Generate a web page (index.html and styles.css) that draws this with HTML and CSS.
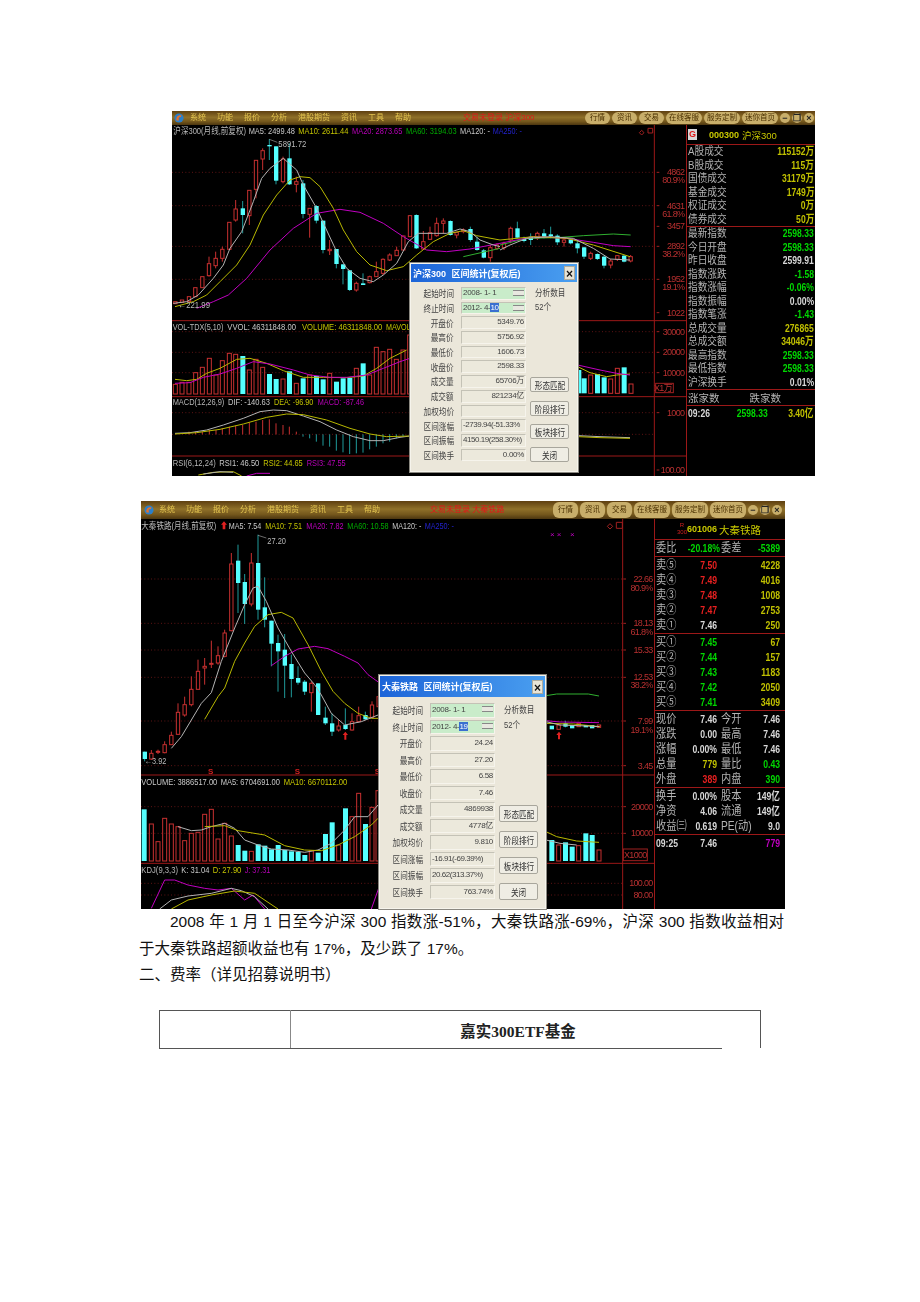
FILE: index.html
```html
<!doctype html>
<html lang="zh-CN">
  <head>
    <meta charset="UTF-8" />
    <title>沪深300 区间统计</title>
    <link rel="stylesheet" href="styles.css">
  </head>
  <body>
    <div class="page">
      <!-- first terminal shot -->
      <div class="app app-index">
        <div class="titlebar">
          <svg class="logo" viewBox="0 0 12 12"><circle cx="6" cy="6" r="5.5" fill="#2b7fc9"/><path d="M3 9 C2 5 5 2 9 3 L8 5 C6 4.500 5 6 6 9 Z" fill="#e8722a"/></svg>
          <div class="menu"><span>系统</span><span>功能</span><span>报价</span><span>分析</span><span>港股期货</span><span>资讯</span><span>工具</span><span>帮助</span></div>
          <div class="status-red">交易未登录 沪深300</div>
          <div class="pills"><span>行情</span><span>资讯</span><span>交易</span><span class="wide">在线客服</span><span class="wide">服务定制</span><span class="wide">迷你首页</span></div>
          <div class="winbtns"><span>−</span><span>❐</span><span>×</span></div>
        </div>
        <div class="app-body">
          <svg class="chart" viewBox="0 0 1542 1053" width="514" height="351">
            <g class="dots">
              <path d="M0 142H1446M0 242H1446M0 364H1446M0 463H1446M0 620H1446M0 682H1446M0 743H1446M0 863H1446M0 928H1446"/>
            </g>
            <path class="rule" d="M0 587H1542M0 815H1542M0 993H1542M1447 0V1053"/>
            <g id="a-main" transform="translate(-6 -60)"></g>
            <g id="a-main2" transform="translate(984 -60)"></g>
            <g id="a-low" transform="translate(-6 495)"></g>
            <g id="a-right" transform="translate(684 405)"></g>

            <g transform="translate(-6 -60)">
              <text class="lbl c-grey" x="10" y="87" textLength="218" lengthAdjust="spacingAndGlyphs">沪深300(月线,前复权)</text>
              <text class="lbl c-white" x="236" y="87" textLength="139" lengthAdjust="spacingAndGlyphs">MA5: 2499.48</text>
              <text class="lbl c-yellow" x="385" y="87" textLength="150" lengthAdjust="spacingAndGlyphs">MA10: 2611.44</text>
              <text class="lbl c-magenta" x="546" y="87" textLength="151" lengthAdjust="spacingAndGlyphs">MA20: 2873.65</text>
              <text class="lbl c-green" x="708" y="87" textLength="152" lengthAdjust="spacingAndGlyphs">MA60: 3194.03</text>
              <text class="lbl c-white" x="870" y="87" textLength="90" lengthAdjust="spacingAndGlyphs">MA120: -</text>
              <text class="lbl c-blue" x="968" y="87" textLength="88" lengthAdjust="spacingAndGlyphs">MA250: -</text>
              <text class="lbl c-grey" x="325" y="127" textLength="84" lengthAdjust="spacingAndGlyphs">5891.72</text>
              <path class="thin" d="M298 103 L322 112"/>
              <text class="lbl c-grey" x="25" y="609" textLength="95" lengthAdjust="spacingAndGlyphs">←221.99</text>
            </g>
            <g transform="translate(-6 495)">
              <text class="lbl c-grey" x="8" y="119" textLength="152" lengthAdjust="spacingAndGlyphs">VOL-TDX(5,10)</text>
              <text class="lbl c-white" x="172" y="119" textLength="206" lengthAdjust="spacingAndGlyphs">VVOL: 46311848.00</text>
              <text class="lbl c-yellow" x="396" y="119" textLength="241" lengthAdjust="spacingAndGlyphs">VOLUME: 46311848.00</text>
              <text class="lbl c-yellow" x="648" y="119" textLength="74" lengthAdjust="spacingAndGlyphs">MAVOL</text>
              <text class="lbl c-grey" x="8" y="344" textLength="155" lengthAdjust="spacingAndGlyphs">MACD(12,26,9)</text>
              <text class="lbl c-white" x="174" y="344" textLength="126" lengthAdjust="spacingAndGlyphs">DIF: -140.63</text>
              <text class="lbl c-yellow" x="312" y="344" textLength="118" lengthAdjust="spacingAndGlyphs">DEA: -96.90</text>
              <text class="lbl c-magenta" x="443" y="344" textLength="139" lengthAdjust="spacingAndGlyphs">MACD: -87.46</text>
              <text class="lbl c-grey" x="8" y="527" textLength="129" lengthAdjust="spacingAndGlyphs">RSI(6,12,24)</text>
              <text class="lbl c-white" x="148" y="527" textLength="120" lengthAdjust="spacingAndGlyphs">RSI1: 46.50</text>
              <text class="lbl c-yellow" x="280" y="527" textLength="118" lengthAdjust="spacingAndGlyphs">RSI2: 44.65</text>
              <text class="lbl c-magenta" x="410" y="527" textLength="117" lengthAdjust="spacingAndGlyphs">RSI3: 47.55</text>
            </g>
            <g class="ticks"><path d="M1454 142h8M1454 242h8M1454 304h8M1454 364h8M1454 463h8M1454 563h8M1454 620h8M1454 682h8M1454 743h8M1454 863h8M1454 1035h8"/></g>
            <g class="ax">
              <text x="1537" y="151">4862</text><text x="1537" y="175">80.9%</text>
              <text x="1537" y="251">4631</text><text x="1537" y="275">61.8%</text>
              <text x="1537" y="312">3457</text>
              <text x="1537" y="373">2892</text><text x="1537" y="397">38.2%</text>
              <text x="1537" y="472">1952</text><text x="1537" y="496">19.1%</text>
              <text x="1537" y="572">1022</text>
              <text x="1537" y="629">30000</text><text x="1537" y="691">20000</text><text x="1537" y="752">10000</text>
              <text x="1537" y="872">1000</text><text x="1537" y="1044">100.00</text>
              <text x="1500" y="799">X1万</text>
            </g>
            <rect class="box" x="1451" y="775" width="53" height="28"/>
            <path class="box" d="M1409 16l7 7 -7 7 -7 -7zM1428 10h14v14h-14z"/>
          </svg>
          <div class="side side-index">
            <div class="sec sec-head">
              <span class="g-mark">G</span>
              <span class="code">000300</span><span class="name">沪深300</span>
            </div>
            <div class="sec">
              <div class="row"><span>A股成交</span><b class="y">115152万</b></div>
              <div class="row"><span>B股成交</span><b class="y">115万</b></div>
              <div class="row"><span>国债成交</span><b class="y">31179万</b></div>
              <div class="row"><span>基金成交</span><b class="y">1749万</b></div>
              <div class="row"><span>权证成交</span><b class="y">0万</b></div>
              <div class="row"><span>债券成交</span><b class="y">50万</b></div>
            </div>
            <div class="sec">
              <div class="row"><span>最新指数</span><b class="gn">2598.33</b></div>
              <div class="row"><span>今日开盘</span><b class="gn">2598.33</b></div>
              <div class="row"><span>昨日收盘</span><b class="w">2599.91</b></div>
              <div class="row"><span>指数涨跌</span><b class="gn">-1.58</b></div>
              <div class="row"><span>指数涨幅</span><b class="gn">-0.06%</b></div>
              <div class="row"><span>指数振幅</span><b class="w">0.00%</b></div>
              <div class="row"><span>指数笔涨</span><b class="gn">-1.43</b></div>
              <div class="row"><span>总成交量</span><b class="y">276865</b></div>
              <div class="row"><span>总成交额</span><b class="y">34046万</b></div>
              <div class="row"><span>最高指数</span><b class="gn">2598.33</b></div>
              <div class="row"><span>最低指数</span><b class="gn">2598.33</b></div>
              <div class="row"><span>沪深换手</span><b class="w">0.01%</b></div>
            </div>
            <div class="sec sec-updown"><span>涨家数</span><span>跌家数</span></div>
            <div class="tick-row"><b class="w">09:26</b><b class="gn">2598.33</b><b class="y">3.40亿</b></div>
          </div>
        </div>

        <div class="dlg dlg-index">
          <div class="dlg-title"><span>沪深300 区间统计(复权后)</span><i class="dlg-x">×</i></div>
          <div class="dlg-body">
            <div class="dlg-form">
              <label>起始时间</label><div class="field date">2008- 1- 1<s></s></div>
              <label>终止时间</label><div class="field date">2012- 4-<em>10</em><s></s></div>
              <label>开盘价</label><div class="field">5349.76</div>
              <label>最高价</label><div class="field">5756.92</div>
              <label>最低价</label><div class="field">1606.73</div>
              <label>收盘价</label><div class="field">2598.33</div>
              <label>成交量</label><div class="field">65706万</div>
              <label>成交额</label><div class="field">821234亿</div>
              <label>加权均价</label><div class="field"></div>
              <label>区间涨幅</label><div class="field tight">-2739.94(-51.33%</div>
              <label>区间振幅</label><div class="field tight">4150.19(258.30%)</div>
              <label>区间换手</label><div class="field">0.00%</div>
            </div>
            <div class="dlg-side">
              <div class="dlg-note">分析数目</div>
              <div class="dlg-note">52个</div>
              <div class="dlg-btns"><button><span>形态匹配</span></button><button><span>阶段排行</span></button><button><span>板块排行</span></button><button><span>关闭</span></button></div>
            </div>
          </div>
        </div>
      </div>

      <!-- second terminal shot -->
      <div class="app app-stock">
        <div class="titlebar">
          <svg class="logo" viewBox="0 0 12 12"><circle cx="6" cy="6" r="5.500" fill="#2b7fc9"/><path d="M3 9 C2 5 5 2 9 3 L8 5 C6 4.500 5 6 6 9 Z" fill="#e8722a"/></svg>
          <div class="menu"><span>系统</span><span>功能</span><span>报价</span><span>分析</span><span>港股期货</span><span>资讯</span><span>工具</span><span>帮助</span></div>
          <div class="status-red">交易未登录 大秦铁路</div>
          <div class="pills"><span>行情</span><span>资讯</span><span>交易</span><span class="wide">在线客服</span><span class="wide">服务定制</span><span class="wide">迷你首页</span></div>
          <div class="winbtns"><span>−</span><span>❐</span><span>×</span></div>
        </div>
        <div class="app-body">
          <svg class="chart" viewBox="0 0 1539 1170" width="513" height="390">
            <g class="dots">
              <path d="M0 180H1445M0 313H1445M0 393H1445M0 475H1445M0 606H1445M0 740H1445M0 863H1445M0 943H1445M0 1093H1445M0 1128H1445"/>
            </g>
            <path class="rule" d="M0 768H1539M0 1033H1539M1445 0V1170"/>
            <g id="b-main" transform="translate(-9 -63)"></g>
            <g id="b-low" transform="translate(-9 483)"></g>
            <g id="b-right" transform="translate(957 483)"></g>

            <g transform="translate(-9 -63)">
              <text class="lbl c-grey" x="10" y="94" textLength="225" lengthAdjust="spacingAndGlyphs">大秦铁路(月线,前复权)</text>
              <path d="M258 70l9 10h-5v14h-8v-14h-5z" fill="#e02020"/>
              <text class="lbl c-white" x="272" y="94" textLength="98" lengthAdjust="spacingAndGlyphs">MA5: 7.54</text>
              <text class="lbl c-yellow" x="382" y="94" textLength="110" lengthAdjust="spacingAndGlyphs">MA10: 7.51</text>
              <text class="lbl c-magenta" x="505" y="94" textLength="112" lengthAdjust="spacingAndGlyphs">MA20: 7.82</text>
              <text class="lbl c-green" x="628" y="94" textLength="124" lengthAdjust="spacingAndGlyphs">MA60: 10.58</text>
              <text class="lbl c-white" x="763" y="94" textLength="87" lengthAdjust="spacingAndGlyphs">MA120: -</text>
              <text class="lbl c-blue" x="860" y="94" textLength="88" lengthAdjust="spacingAndGlyphs">MA250: -</text>
              <text class="lbl c-grey" x="388" y="138" textLength="56" lengthAdjust="spacingAndGlyphs">27.20</text>
              <path class="thin" d="M360 112 L385 120"/>
            </g>
            <g transform="translate(-9 483)">
              <text class="lbl c-grey" x="20" y="251" textLength="65" lengthAdjust="spacingAndGlyphs">←3.92</text>
              <text class="s-mark" x="218" y="283">S</text><text class="s-mark" x="478" y="283">S</text><text class="s-mark" x="718" y="283">S</text>
              <path d="M622 155l8 10h-5v14h-6v-14h-5z" fill="#e02020"/>
              <text class="lbl c-white" x="10" y="314" textLength="228" lengthAdjust="spacingAndGlyphs">VOLUME: 3886517.00</text>
              <text class="lbl c-white" x="248" y="314" textLength="178" lengthAdjust="spacingAndGlyphs">MA5: 6704691.00</text>
              <text class="lbl c-yellow" x="437" y="314" textLength="191" lengthAdjust="spacingAndGlyphs">MA10: 6670112.00</text>
              <text class="lbl c-grey" x="10" y="579" textLength="110" lengthAdjust="spacingAndGlyphs">KDJ(9,3,3)</text>
              <text class="lbl c-white" x="130" y="579" textLength="84" lengthAdjust="spacingAndGlyphs">K: 31.04</text>
              <text class="lbl c-yellow" x="224" y="579" textLength="86" lengthAdjust="spacingAndGlyphs">D: 27.90</text>
              <text class="lbl c-magenta" x="320" y="579" textLength="77" lengthAdjust="spacingAndGlyphs">J: 37.31</text>
            </g>
            <g transform="translate(957 483)">
              <path d="M297 155l8 10h-5v13h-6v-13h-5z" fill="#e02020"/>
            </g>
            <g transform="translate(957 -63)">
              <text class="x-mark" x="277" y="117">×</text><text class="x-mark" x="297" y="117">×</text><text class="x-mark" x="337" y="117">×</text>
            </g>
            <g class="ticks"><path d="M1447 180h8M1447 313h8M1447 393h8M1447 475h8M1447 606h8M1447 740h8M1447 863h8M1447 943h8"/></g>
            <g class="ax">
              <text x="1535" y="189">22.66</text><text x="1535" y="216">80.9%</text>
              <text x="1535" y="322">18.13</text><text x="1535" y="348">61.8%</text>
              <text x="1535" y="402">15.33</text>
              <text x="1535" y="484">12.53</text><text x="1535" y="508">38.2%</text>
              <text x="1535" y="615">7.99</text><text x="1535" y="642">19.1%</text>
              <text x="1535" y="750">3.45</text>
              <text x="1535" y="872">20000</text><text x="1535" y="952">10000</text>
              <text x="1517" y="1016">X1000</text>
              <text x="1535" y="1102">100.00</text><text x="1535" y="1137">80.00</text>
            </g>
            <rect class="box" x="1447" y="990" width="72" height="35"/>
            <path class="box" d="M1407 14l8 8 -8 8 -8 -8zM1426 10h18v18h-18z"/>
          </svg>
          <div class="side side-stock">
            <div class="sec sec-head">
              <span class="r-mark">R<br>300</span>
              <span class="code">601006</span><span class="name">大秦铁路</span>
            </div>
            <div class="sec">
              <div class="q"><span>委比</span><b class="gn">-20.18%</b><span>委差</span><b class="gn">-5389</b></div>
            </div>
            <div class="sec">
              <div class="q"><span>卖⑤</span><b class="r">7.50</b><span></span><b class="y">4228</b></div>
              <div class="q"><span>卖④</span><b class="r">7.49</b><span></span><b class="y">4016</b></div>
              <div class="q"><span>卖③</span><b class="r">7.48</b><span></span><b class="y">1008</b></div>
              <div class="q"><span>卖②</span><b class="r">7.47</b><span></span><b class="y">2753</b></div>
              <div class="q"><span>卖①</span><b class="w">7.46</b><span></span><b class="y">250</b></div>
            </div>
            <div class="sec">
              <div class="q"><span>买①</span><b class="gn">7.45</b><span></span><b class="y">67</b></div>
              <div class="q"><span>买②</span><b class="gn">7.44</b><span></span><b class="y">157</b></div>
              <div class="q"><span>买③</span><b class="gn">7.43</b><span></span><b class="y">1183</b></div>
              <div class="q"><span>买④</span><b class="gn">7.42</b><span></span><b class="y">2050</b></div>
              <div class="q"><span>买⑤</span><b class="gn">7.41</b><span></span><b class="y">3409</b></div>
            </div>
            <div class="sec">
              <div class="q"><span>现价</span><b class="w">7.46</b><span>今开</span><b class="w">7.46</b></div>
              <div class="q"><span>涨跌</span><b class="w">0.00</b><span>最高</span><b class="w">7.46</b></div>
              <div class="q"><span>涨幅</span><b class="w">0.00%</b><span>最低</span><b class="w">7.46</b></div>
              <div class="q"><span>总量</span><b class="y">779</b><span>量比</span><b class="gn">0.43</b></div>
              <div class="q"><span>外盘</span><b class="r">389</b><span>内盘</span><b class="gn">390</b></div>
            </div>
            <div class="sec">
              <div class="q"><span>换手</span><b class="w">0.00%</b><span>股本</span><b class="w">149亿</b></div>
              <div class="q"><span>净资</span><b class="w">4.06</b><span>流通</span><b class="w">149亿</b></div>
              <div class="q"><span>收益㈢</span><b class="w">0.619</b><span>PE(动)</span><b class="w">9.0</b></div>
            </div>
            <div class="q tick-q"><b class="w">09:25</b><b class="w">7.46</b><span></span><b class="m">779</b></div>
          </div>
        </div>

        <div class="dlg dlg-stock">
          <div class="dlg-title"><span>大秦铁路 区间统计(复权后)</span><i class="dlg-x">×</i></div>
          <div class="dlg-body">
            <div class="dlg-form">
              <label>起始时间</label><div class="field date">2008- 1- 1<s></s></div>
              <label>终止时间</label><div class="field date">2012- 4-<em>19</em><s></s></div>
              <label>开盘价</label><div class="field">24.24</div>
              <label>最高价</label><div class="field">27.20</div>
              <label>最低价</label><div class="field">6.58</div>
              <label>收盘价</label><div class="field">7.46</div>
              <label>成交量</label><div class="field">4869938</div>
              <label>成交额</label><div class="field">4778亿</div>
              <label>加权均价</label><div class="field">9.810</div>
              <label>区间涨幅</label><div class="field tight">-16.91(-69.39%)</div>
              <label>区间振幅</label><div class="field tight">20.62(313.37%)</div>
              <label>区间换手</label><div class="field">763.74%</div>
            </div>
            <div class="dlg-side">
              <div class="dlg-note">分析数目</div>
              <div class="dlg-note">52个</div>
              <div class="dlg-btns"><button><span>形态匹配</span></button><button><span>阶段排行</span></button><button><span>板块排行</span></button><button><span>关闭</span></button></div>
            </div>
          </div>
        </div>
      </div>

      <div class="doc">
        <p>2008 年 1 月 1 日至今沪深 300 指数涨-51%，大秦铁路涨-69%，沪深 300 指数收益相对于大秦铁路超额收益也有 17%，及少跌了 17%。</p>
        <div class="doc-head">二、费率（详见招募说明书）</div>
      </div>

      <table class="fee">
        <tr><td class="fee-side"></td><td class="fee-name">嘉实300ETF基金</td></tr>
      </table>
      <div class="fee-rule"></div>
    </div>
    <script src="charts.js"></script>
  </body>
</html>
```
FILE: styles.css
```css
* {
  margin: 0;
  padding: 0;
  box-sizing: border-box;
}

body {
  background: white;
  font-family: "Liberation Sans", "Noto Sans CJK SC", sans-serif;
  color: #222;
}

.page {
  min-height: 1302px;
  padding-top: 111px;
}

/* terminal screenshots */
.app {
  position: relative;
  width: 643px;
  background: black;
  filter: blur(0.5px);
}

.app-index {
  margin-left: 172px;
}

.app-stock {
  margin-left: 141px;
  margin-top: 25px;
  width: 644px;
}

.app-body {
  display: flex;
}

.chart {
  display: block;
  flex: none;
}

.titlebar {
  display: flex;
  align-items: center;
  height: 14px;
  background: linear-gradient(#5e3f10, #8f7029 45%, #74571c 75%, #4c3610);
  font-size: 8px;
  line-height: 1;
  overflow: hidden;
  padding-left: 2px;
}

.app-stock .titlebar {
  height: 18px;
  padding-left: 3px;
}

.logo {
  width: 10px;
  height: 10px;
  flex: none;
}

.menu {
  display: flex;
  flex: none;
  gap: 11px;
  margin-left: 6px;
  color: #e4c550;
  white-space: nowrap;
  width: 273px;
}

.app-stock .menu {
  margin-left: 5px;
  width: 271px;
}

.status-red {
  flex: none;
  color: #e01818;
  white-space: nowrap;
  width: 122px;
}

.app-stock .status-red {
  width: 123px;
}

.pills {
  display: flex;
  flex: none;
  gap: 2px;
  white-space: nowrap;
}

.pills span {
  display: block;
  height: 12px;
  line-height: 12px;
  padding: 0 5px;
  border-radius: 6px;
  background: #c8ae6a;
  color: #4a3000;
  font-size: 7.500px;
  text-align: center;
}

.pills .wide {
  padding: 0 3px;
}

.app-stock .pills span {
  height: 16px;
  line-height: 16px;
}

.winbtns {
  display: flex;
  gap: 2px;
  margin-left: 2px;
}

.winbtns span {
  width: 10px;
  height: 10px;
  line-height: 10px;
  border-radius: 50%;
  background: #c8ae6a;
  color: #222;
  text-align: center;
  font-size: 9px;
  font-weight: bold;
}

/* svg chart text and lines */
.lbl {
  font-size: 29px;
}

.c-grey { fill: #b8b8b8; }
.c-white { fill: #c8c8c8; }
.c-yellow { fill: #c4c400; }
.c-magenta { fill: #b800b8; }
.c-green { fill: #00a800; }
.c-blue { fill: #2222cc; }

.dots path {
  fill: none;
  stroke: #8c1c1c;
  stroke-width: 2;
  stroke-dasharray: 3 7;
}

.rule {
  fill: none;
  stroke: #9c1818;
  stroke-width: 3;
}

.ticks path {
  fill: none;
  stroke: #a02020;
  stroke-width: 3;
}

.thin {
  fill: none;
  stroke: #a0a0a0;
  stroke-width: 2;
}

.box {
  fill: none;
  stroke: #a02020;
  stroke-width: 3;
}

.ax text {
  font-size: 27px;
  fill: #b83030;
  text-anchor: end;
  letter-spacing: -2px;
}

.s-mark {
  font-size: 24px;
  font-weight: bold;
  fill: #d02020;
  text-anchor: middle;
}

.x-mark {
  font-size: 24px;
  fill: #c000c0;
  text-anchor: middle;
}

/* right hand info column */
.side {
  flex: 1;
  border-left: 1px solid #9c1818;
  color: #b4b4b4;
  font-size: 11px;
  overflow: hidden;
}

.sec {
  border-bottom: 1px solid #9c1818;
}

.sec-head {
  display: flex;
  align-items: center;
  height: 20px;
  color: #c8c800;
}

.g-mark {
  width: 9px;
  height: 11px;
  margin-left: 1px;
  background: #d8d8d8;
  color: #e01818;
  font-size: 9px;
  font-weight: bold;
  line-height: 11px;
  text-align: center;
}

.code {
  margin-left: 12px;
  font-size: 9px;
  font-weight: bold;
}

.name {
  margin-left: 3px;
  font-size: 9.500px;
}

.row {
  display: flex;
  justify-content: space-between;
  height: 13.500px;
  line-height: 13.500px;
  padding: 0 1px;
}

.row span,
.q span {
  display: inline-block;
  transform: scaleX(0.88);
  transform-origin: left center;
  white-space: nowrap;
}

.row b,
.q b,
.tick-row b {
  display: inline-block;
  font-size: 11px;
  transform: scaleX(0.78);
  transform-origin: right center;
  white-space: nowrap;
}

.y { color: #c0c000; }
.gn { color: #00d800; }
.w { color: #d8d8d8; }
.r { color: #e82020; }
.m { color: #c000c0; }

.sec-updown {
  display: flex;
  gap: 30px;
  height: 16px;
  line-height: 16px;
  padding-left: 1px;
  font-size: 10.500px;
}

.tick-row {
  display: flex;
  justify-content: space-between;
  padding: 1px 2px 0 1px;
  line-height: 13px;
}

.tick-row b:first-child {
  transform-origin: left center;
}

.side-stock {
  font-size: 12px;
}

.side-stock .sec-head {
  height: 21px;
}

.r-mark {
  width: 10px;
  margin-left: 22px;
  color: #d02020;
  font-size: 6px;
  line-height: 7px;
  text-align: center;
}

.side-stock .code {
  margin-left: 0;
  font-size: 9px;
}

.side-stock .name {
  margin-left: 2px;
  font-size: 10.500px;
}

.side-stock .sec {
  padding-top: 1px;
}

.side-stock .sec-head {
  padding-top: 0;
}

.q {
  display: grid;
  grid-template-columns: 22px 39px 22px 41px;
  height: 15px;
  line-height: 15px;
  padding-left: 1px;
  white-space: nowrap;
}

.q b {
  font-size: 11.500px;
  transform: scaleX(0.75);
  text-align: right;
}

.q span {
  transform: scaleX(0.85);
}

.q span:nth-child(3) {
  margin-left: 4px;
}

.tick-q {
  margin-top: 1px;
}

.tick-q b:first-child {
  text-align: left;
  transform-origin: left center;
}

/* statistics dialog */
.dlg {
  position: absolute;
  left: 238px;
  width: 168px;
  background: #ebe7da;
  border: 1px solid #f6f4ec;
  outline: 1px solid #8a8880;
  overflow: hidden;
  font-size: 10px;
  color: #444;
  --row: 14.700px;
  --btn: 15px;
  --btn-gap: 8.300px;
}

.dlg-index {
  top: 152px;
  height: 209px;
}

.dlg-stock {
  top: 174px;
  height: 234px;
  width: 167px;
  --row: 16.500px;
  --btn: 17px;
  --btn-gap: 9px;
}

.dlg-title {
  display: flex;
  align-items: center;
  justify-content: space-between;
  height: 18px;
  padding: 0 2px 0 2px;
  background: linear-gradient(90deg, #1c64d8, #4a9ff0);
  color: white;
  font-size: 9px;
  font-weight: bold;
  word-spacing: 3px;
  white-space: nowrap;
}

.dlg-stock .dlg-title {
  height: 21px;
}

.dlg-x {
  width: 11px;
  height: 14px;
  line-height: 14px;
  background: #e8e4d6;
  border: 1px solid #b0ac9c;
  color: #111;
  font-style: normal;
  font-size: 12px;
  text-align: center;
}

.dlg-body {
  display: flex;
  padding-top: 4px;
}

.dlg-stock .dlg-body {
  padding-top: 5px;
}

.dlg-form {
  display: grid;
  grid-template-columns: 43px 65px;
  grid-auto-rows: var(--row);
  column-gap: 7px;
  align-items: center;
}

.dlg-form label {
  justify-self: end;
  font-size: 9.500px;
  white-space: nowrap;
  transform: scaleX(0.8);
  transform-origin: right center;
}

.field {
  position: relative;
  height: calc(var(--row) - 2px);
  line-height: calc(var(--row) - 4px);
  padding: 0 1px;
  background: #ece9dc;
  border: 1px solid #c4c2b6;
  border-right-color: #f6f4ec;
  border-bottom-color: #f6f4ec;
  font-size: 8px;
  letter-spacing: -0.3px;
  text-align: right;
  white-space: nowrap;
  overflow: hidden;
}

.tight {
  letter-spacing: -0.45px;
  text-align: left;
}

.date {
  background: #c9ecca;
  text-align: left;
}

.date em {
  background: #3a6fd0;
  color: white;
  font-style: normal;
}

/* spinner arrows of the date box */
.date s {
  position: absolute;
  right: 1px;
  top: 2px;
  width: 11px;
  height: 6px;
  border-top: 1px solid #888;
  border-bottom: 1px solid #888;
  background: #e8e8e0;
}

.dlg-side {
  display: flex;
  flex-direction: column;
  width: 39px;
  margin-left: 4px;
}

.dlg-note {
  height: 14px;
  line-height: 14px;
  margin-left: 5px;
  font-size: 9.500px;
  white-space: nowrap;
  transform: scaleX(0.8);
  transform-origin: left center;
}

.dlg-stock .dlg-note {
  height: 15px;
  line-height: 15px;
}

.dlg-btns {
  display: flex;
  flex-direction: column;
  gap: var(--btn-gap);
  margin-top: auto;
}

.dlg-btns button {
  height: var(--btn);
  background: #efede4;
  border: 1px solid #a8a69c;
  border-radius: 2px;
  color: #333;
  font-family: inherit;
  font-size: 9.500px;
  white-space: nowrap;
}

.dlg-btns span {
  display: inline-block;
  transform: scaleX(0.8);
}

/* document text under the shots */
.doc {
  width: 645px;
  margin: -1px 0 0 139px;
  font-size: 15.500px;
  line-height: 27px;
  color: #111;
}

.doc p {
  text-indent: 31px;
  text-align: justify;
}

.doc-head {
  line-height: 25px;
}

.fee {
  width: 602px;
  height: 38px;
  margin: 23px 0 0 159px;
  border-collapse: collapse;
  border-top: 1px solid #555;
  border-left: 1px solid #555;
  border-right: 1px solid #555;
}

.fee-side {
  width: 131px;
  border-right: 1px solid #888;
}

.fee-name {
  padding-right: 15px;
  text-align: center;
  font-family: "Liberation Serif", "Noto Sans CJK SC", serif;
  font-size: 15.500px;
  font-weight: bold;
}

.fee-rule {
  width: 563px;
  height: 1px;
  margin-left: 159px;
  background: #555;
}
```
FILE: charts.js
```js
// Everything here is in 3x screen px, same units as the svg viewBox.
const NS = "http://www.w3.org/2000/svg";
const RED = "#c83030";
const CYAN = "#55ffff";
const TEAL = "#1f9a9a";

function add(parent, tag, attrs) {
  const el = document.createElementNS(NS, tag);
  for (const key in attrs) el.setAttribute(key, attrs[key]);
  parent.appendChild(el);
  return el;
}

function wick(g, x, y1, y2, color) {
  add(g, "line", { x1: x, x2: x, y1: y1, y2: y2, stroke: color, "stroke-width": 3 });
}

// [x, bodyTop, bodyBottom, wickTop, wickBottom]
function candles(id, reds, cyans) {
  const g = document.getElementById(id);
  reds.forEach(([x, top, bottom, w1, w2]) => {
    if (w1 !== undefined) {
      wick(g, x, w1, top, RED);
      wick(g, x, bottom, w2, RED);
    }
    add(g, "rect", { x: x - 5, y: top, width: 10, height: bottom - top, fill: "black", stroke: RED, "stroke-width": 3 });
  });
  cyans.forEach(([x, top, bottom, w1, w2]) => {
    if (w1 !== undefined) wick(g, x, w1, w2, TEAL);
    add(g, "rect", { x: x - 6, y: top, width: 13, height: bottom - top, fill: CYAN });
  });
}

// [x, top] down to the shared base line
function bars(id, base, reds, cyans) {
  const g = document.getElementById(id);
  reds.forEach(([x, top]) => {
    add(g, "rect", { x: x - 6, y: top, width: 12, height: base - top, fill: "none", stroke: RED, "stroke-width": 3 });
  });
  cyans.forEach(([x, top]) => {
    add(g, "rect", { x: x - 7, y: top, width: 15, height: base - top, fill: CYAN });
  });
}

function stems(id, zero, list, color) {
  const g = document.getElementById(id);
  list.forEach(([x, y]) => wick(g, x, zero, y, color));
}

function line(id, color, points) {
  add(document.getElementById(id), "polyline", { points: points, fill: "none", stroke: color, "stroke-width": 3, "stroke-linejoin": "round" });
}

const GREY = "#b4b4b4";
const YELLOW = "#b8b800";
const MAGENTA = "#c000c0";
const GREEN = "#30b030";

// ---- index chart, main panel
candles("a-main", [
  [16, 590, 596], [36, 585, 592], [57, 575, 590], [76, 548, 575],
  [97, 515, 548], [117, 476, 512, 455, 515], [137, 460, 482, 440, 490],
  [157, 433, 460, 425, 470], [178, 352, 433], [197, 312, 345, 285, 350],
  [238, 256, 332, 256, 360], [258, 166, 253, 166, 280], [278, 137, 162, 130, 195],
  [339, 162, 230, 155, 235], [379, 230, 238, 215, 262], [419, 310, 328, 310, 398],
  [479, 433, 437, 405, 450], [559, 535, 555, 530, 560], [599, 515, 533, 512, 535],
  [619, 500, 515, 470, 515], [639, 463, 505, 460, 510], [659, 450, 465, 445, 468],
  [680, 436, 452, 425, 453], [700, 393, 435, 392, 436], [720, 332, 395, 330, 395],
  [760, 410, 432, 378, 435], [780, 383, 403, 365, 405], [800, 355, 392, 338, 395],
  [820, 348, 355, 340, 385], [860, 382, 390, 382, 400], [880, 375, 380, 370, 385],
  [961, 428, 458, 420, 470], [981, 420, 430, 415, 435],
], [
  [218, 310, 330, 288, 385], [298, 120, 124, 102, 165], [318, 124, 227, 124, 238],
  [358, 160, 238, 115, 240], [399, 235, 327, 225, 340], [439, 303, 347, 300, 355],
  [459, 347, 435, 347, 445], [499, 432, 477, 432, 490], [519, 478, 492, 478, 538],
  [539, 496, 555, 496, 558], [579, 535, 540, 505, 540], [739, 330, 430, 328, 432],
  [841, 348, 390, 346, 392], [901, 372, 405, 365, 410], [921, 410, 435, 395, 437],
  [941, 436, 458, 432, 460],
]);
line("a-main", GREEN, "880,455 990,430");
line("a-main", MAGENTA, "80,610 130,590 175,570 230,520 300,435 370,370 440,325 510,313 570,322 640,355 700,395 770,435 830,440 900,432 990,415");
line("a-main", YELLOW, "15,605 70,590 110,570 150,530 200,480 240,420 280,330 320,270 360,225 390,215 420,218 450,245 490,310 520,375 560,440 600,480 650,497 700,485 740,450 790,410 840,385 880,377 920,392 990,405");
line("a-main", GREY, "10,595 50,590 85,570 130,520 160,480 180,430 215,380 250,290 275,220 300,190 340,160 380,195 400,240 440,310 465,365 500,440 530,490 570,520 610,530 640,510 680,475 715,410 745,385 790,385 830,385 870,372 900,380 930,405 970,420 990,425");

candles("a-main2", [
  [12, 415, 428, 410, 435], [32, 370, 405, 365, 415], [112, 385, 400, 380, 405],
  [192, 405, 412, 400, 425], [272, 445, 460, 440, 465], [332, 468, 480, 462, 490],
  [352, 452, 463, 450, 468], [392, 455, 468, 450, 472],
], [
  [52, 370, 398, 350, 400], [72, 402, 408, 395, 412], [92, 395, 405, 385, 420],
  [132, 385, 395, 372, 400], [152, 388, 393, 365, 400], [172, 392, 412, 388, 420],
  [212, 403, 415, 400, 418], [232, 415, 430, 408, 445], [252, 427, 455, 425, 462],
  [292, 447, 462, 445, 465], [312, 455, 482, 452, 490], [372, 452, 470, 450, 472],
]);
line("a-main2", GREEN, "0,420 80,400 170,398 250,392 340,387 392,390");
line("a-main2", MAGENTA, "0,415 100,395 200,400 280,412 340,422 392,425");
line("a-main2", YELLOW, "0,405 100,395 200,400 280,420 390,455");
line("a-main2", GREY, "0,435 30,420 80,400 150,395 220,400 280,430 330,462 390,465");

// ---- index chart, volume / macd / rsi panels
bars("a-low", 312, [
  [16, 283], [36, 277], [57, 277], [77, 248], [97, 232], [118, 205], [138, 255],
  [157, 212], [178, 190], [197, 193], [238, 240], [258, 208], [278, 232], [339, 267],
  [379, 280], [419, 255], [479, 250], [559, 235], [599, 255], [619, 172], [639, 185],
  [659, 178], [679, 208], [699, 180], [719, 135],
], [
  [218, 198], [298, 252], [318, 267], [358, 244], [399, 265], [439, 258], [459, 268],
  [499, 275], [519, 265], [539, 264], [579, 220],
]);
line("a-low", YELLOW, "15,268 50,272 80,268 110,250 150,235 200,208 240,205 290,220 340,242 400,262 460,262 530,263 580,258 620,235 660,205 710,180");
line("a-low", MAGENTA, "15,280 60,278 100,262 150,252 200,235 250,215 300,222 370,240 420,255 480,262 530,262 590,255 640,235 690,215 720,205");
stems("a-low", 433, [[57, 425], [77, 425], [97, 425], [118, 420], [138, 420], [157, 415], [178, 410], [197, 407], [218, 405], [238, 398], [258, 395], [278, 390], [298, 388], [318, 400], [339, 405], [358, 410], [379, 425]], RED);
stems("a-low", 433, [[399, 440], [419, 445], [439, 455], [459, 467], [479, 470], [499, 482], [519, 487], [539, 492], [559, 490], [579, 488], [599, 478], [619, 470], [639, 460], [659, 455], [679, 445], [699, 440]], TEAL);
line("a-low", GREY, "15,430 60,428 110,420 160,405 220,385 270,365 310,360 350,362 400,378 450,395 500,420 550,440 600,452 640,452 690,442 720,438");
line("a-low", YELLOW, "15,432 80,428 150,418 220,402 290,382 350,372 400,374 470,390 540,415 600,432 650,440 720,438");
line("a-low", YELLOW, "85,555 130,547 190,545 215,558");
line("a-low", GREY, "100,552 150,545 190,547");
line("a-low", MAGENTA, "230,558 260,550 300,550");

bars("a-right", 400, [[572, 345], [632, 357], [652, 325], [693, 372]], [[536, 330], [552, 355], [592, 342], [612, 352], [672, 322]]);
line("a-right", YELLOW, "533,320 570,338 620,350 650,345 690,342");
line("a-right", MAGENTA, "533,315 600,330 650,340 690,345");
line("a-right", GREY, "535,527 600,530 690,533");
line("a-right", YELLOW, "535,530 600,533 690,535");

// ---- stock chart, main panel (lower candles are +546 from the volume crop)
candles("b-main", [
  [160, 574, 620, 535, 625], [180, 520, 574, 485, 575], [200, 505, 510, 480, 560],
  [220, 496, 499, 428, 510], [240, 473, 495, 445, 500], [260, 405, 475, 395, 478],
  [280, 198, 398, 165, 400], [340, 195, 318, 165, 325], [520, 556, 584, 550, 641],
  [40, 766, 783, 756, 786], [60, 760, 763, 755, 768], [80, 740, 764, 730, 766],
  [100, 712, 740, 701, 741], [120, 643, 709, 616, 711], [140, 620, 651, 596, 656],
  [602, 684, 696, 666, 701], [642, 671, 696, 646, 698], [662, 653, 671, 626, 673],
  [702, 621, 658, 610, 660], [722, 596, 626, 585, 628],
], [
  [300, 188, 255, 140, 345], [320, 252, 318, 228, 378], [360, 195, 335, 110, 365],
  [380, 328, 365, 238, 388], [400, 368, 437, 368, 505], [420, 435, 460, 410, 581],
  [440, 455, 503, 408, 600], [460, 498, 543, 470, 598], [480, 540, 554, 505, 560],
  [500, 551, 581, 546, 591], [540, 556, 651, 556, 651], [562, 659, 676, 626, 681],
  [582, 676, 701, 646, 714], [622, 681, 693, 631, 696], [682, 651, 664, 641, 666],
  [20, 761, 783, 761, 790],
]);
line("b-main", MAGENTA, "400,503 440,475 480,453 530,445 570,452 620,475 660,495 690,530 725,555");
line("b-main", YELLOW, "200,664 240,596 260,570 290,490 320,435 350,385 390,350 430,343 465,360 510,440 550,520 585,580 620,616 660,646 700,661 722,661");
line("b-main", GREY, "100,751 130,716 160,666 190,616 220,584 250,490 290,390 320,320 345,270 360,265 385,310 420,390 460,460 500,525 530,560 550,591 580,646 620,681 670,671 720,651");

// ---- stock chart, volume / kdj
bars("b-low", 543, [
  [40, 432], [60, 485], [80, 415], [100, 432], [120, 440], [140, 482], [160, 460],
  [180, 457], [200, 403], [220, 388], [240, 477], [260, 430], [280, 468], [340, 514],
  [520, 512], [602, 495], [642, 410], [662, 340], [702, 382], [720, 332],
], [
  [18, 388], [300, 495], [320, 512], [360, 493], [380, 497], [400, 508], [420, 495],
  [440, 510], [460, 514], [480, 516], [500, 525], [540, 518], [562, 462], [582, 427],
  [622, 385], [682, 432],
]);
line("b-low", GREY, "120,440 160,452 190,450 220,440 260,430 290,445 320,480 360,495 400,507 450,510 500,517 540,510 580,490 620,450 650,410 690,410 720,375");
line("b-low", YELLOW, "200,440 260,437 300,452 380,465 440,497 500,510 550,512 600,495 650,470 700,435 720,415");
line("b-low", MAGENTA, "40,685 80,600 110,600 150,615 200,625 240,630 280,625 320,660 345,645 380,687");
line("b-low", GREY, "65,687 100,660 150,648 220,640 280,625 310,632 350,650 390,687");
line("b-low", YELLOW, "100,687 150,660 220,645 290,633 350,640 420,687");
line("b-low", MAGENTA, "700,687 722,625");

candles("b-right", [[296, 135, 148], [356, 130, 140], [417, 135, 142]], [[275, 137, 148], [316, 130, 140, 122, 142], [336, 135, 145], [377, 135, 142], [396, 135, 145]]);
line("b-right", GREEN, "258,47 290,42 385,42 417,48");
line("b-right", MAGENTA, "258,122 300,126 417,128");
line("b-right", YELLOW, "258,130 340,132 420,140");
line("b-right", GREY, "258,125 300,135 380,138 417,140");
bars("b-right", 543, [[296, 495], [356, 497], [417, 510]], [[275, 480], [316, 487], [336, 500], [377, 460], [396, 465]]);
line("b-right", YELLOW, "258,455 290,470 350,483 417,487");
line("b-right", GREY, "258,480 300,490 350,495");
```
